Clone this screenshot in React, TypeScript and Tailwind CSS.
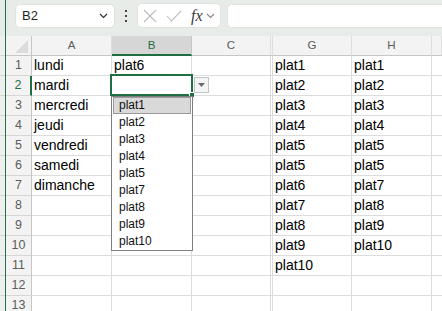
import React from "react";

const rowsA = ["lundi", "mardi", "mercredi", "jeudi", "vendredi", "samedi", "dimanche"];
const colG = ["plat1", "plat2", "plat3", "plat4", "plat5", "plat5", "plat6", "plat7", "plat8", "plat9", "plat10"];
const colH = ["plat1", "plat2", "plat3", "plat4", "plat5", "plat5", "plat7", "plat8", "plat9", "plat10"];
const listItems = ["plat1", "plat2", "plat3", "plat4", "plat5", "plat7", "plat8", "plat9", "plat10"];

const cell = "h-[20px] border-r border-b border-[#dcdcdc] text-[14px] leading-[19px] text-black pl-[2px] whitespace-nowrap overflow-visible";

function Chevron({ className }: { className?: string }) {
  return (
    <svg className={className} width="9" height="6" viewBox="0 0 9 6" fill="none">
      <path d="M1 1l3.5 3.5L8 1" stroke="currentColor" strokeWidth="1.2" />
    </svg>
  );
}

export default function App() {
  const rows = Array.from({ length: 13 }, (_, i) => i + 1);
  return (
    <div className="w-[442px] h-[311px] overflow-hidden flex bg-white font-['Liberation_Sans',sans-serif]">
      {/* left strip */}
      <div className="w-[5px] flex flex-col shrink-0">
        <div className="h-[36px] bg-[#e8ece8]" />
        <div className="flex-1 bg-[#efefef] flex flex-col">
          {rows.map((r) => (
            <div key={r} className="h-[20px] border-b border-[#d6d6d6]" />
          ))}
        </div>
      </div>
      <div className="w-px bg-[#217346] shrink-0" />
      <div className="flex-1 flex flex-col relative min-w-0">
        {/* formula bar */}
        <div className="h-[36px] bg-[#e8ece8] flex items-start pt-[4px] shrink-0">
          <div className="ml-[9px] w-[100px] h-[24px] bg-white rounded-[5px] border border-[#dfe3df] flex items-center justify-between pl-[6px] pr-[6px]">
            <span className="text-[13px] text-[#1f1f1f]">B2</span>
            <Chevron className="text-[#333]" />
          </div>
          <div className="w-[22px] h-[24px] flex flex-col items-center justify-center gap-[3px]">
            <div className="w-[2px] h-[2px] bg-[#444]" />
            <div className="w-[2px] h-[2px] bg-[#444]" />
            <div className="w-[2px] h-[2px] bg-[#444]" />
          </div>
          <div className="w-[84px] h-[25px] -mt-[1px] bg-white rounded-[5px] border border-[#dfe3df] flex items-center pl-[5px]">
            <svg width="14" height="14" viewBox="0 0 14 14" fill="none">
              <path d="M1 1l12 12M13 1L1 13" stroke="#bcbcbc" strokeWidth="1.1" />
            </svg>
            <svg className="ml-[9px]" width="16" height="12" viewBox="0 0 16 12" fill="none">
              <path d="M1 6l4.5 5L15 1" stroke="#bcbcbc" strokeWidth="1.1" />
            </svg>
            <span className="ml-[9px] font-['Liberation_Serif',serif] italic text-[16px] leading-none text-[#3a3a3a]">fx</span>
            <Chevron className="ml-[3px] text-[#8a8a8a]" />
          </div>
          <div className="ml-[6px] flex-1 h-[24px] bg-white rounded-l-[5px] border border-r-0 border-[#dfe3df]" />
        </div>
        {/* grid */}
        <div className="grid grid-cols-[26px_80px_80px_79px_2px_79px_80px_1fr]">
          {/* header row */}
          <div className="h-[20px] bg-[#f3f3f3] border-r border-b border-[#c6c6c6] relative">
            <svg className="absolute left-[9px] top-[4px]" width="13" height="13" viewBox="0 0 13 13">
              <path d="M13 0L13 13L0 13Z" fill="#dcdcdc" />
            </svg>
          </div>
          {[
            ["A", false],
            ["B", true],
            ["C", false],
            ["", false],
            ["G", false],
            ["H", false],
            ["", false],
          ].map(([l, sel], i) => (
            <div
              key={i}
              className={
                sel
                  ? "h-[20px] bg-[#d6d6d6] border-r border-[#c6c6c6] border-b-2 border-b-[#1e6e42] text-[#1e6e42] text-[11.5px] flex items-center justify-center pt-[1px]"
                  : "h-[20px] bg-[#f3f3f3] border-r border-b border-[#c6c6c6] border-r-[#dedede] text-[#5c5c5c] text-[11.5px] flex items-center justify-center"
              }
            >
              {l as string}
            </div>
          ))}
          {rows.map((r) => {
            const sel = r === 2;
            return (
              <React.Fragment key={r}>
                <div
                  className={
                    sel
                      ? "h-[20px] bg-[#f3f3f3] border-b border-[#d6d6d6] border-r-2 border-r-[#1e6e42] text-[#1e6e42] text-[12.5px] flex items-center justify-center"
                      : "h-[20px] bg-[#f3f3f3] border-b border-r border-[#d6d6d6] border-r-[#c6c6c6] text-[#5c5c5c] text-[12.5px] flex items-center justify-center"
                  }
                >
                  {r}
                </div>
                <div className={cell}>{rowsA[r - 1] ?? ""}</div>
                <div className={cell}>{r === 1 ? "plat6" : ""}</div>
                <div className={cell} />
                <div className="h-[20px] border-r border-b border-[#dcdcdc]" />
                <div className={cell}>{colG[r - 1] ?? ""}</div>
                <div className={cell}>{colH[r - 1] ?? ""}</div>
                <div className="h-[20px] border-b border-[#dcdcdc]" />
              </React.Fragment>
            );
          })}
        </div>

        {/* selection */}
        <div className="absolute left-[104px] top-[74px] w-[83px] h-[22px] border-2 border-[#1e6e42]" />
        <div className="absolute left-[183px] top-[92px] w-[5px] h-[5px] bg-[#1e6e42] border-l border-t border-white" />
        {/* dropdown button */}
        <div className="absolute left-[188px] top-[77px] w-[15px] h-[16px] bg-[#f4f4f4] border border-[#c4c4c4] flex items-center justify-center">
          <svg width="7" height="4" viewBox="0 0 7 4">
            <path d="M0 0h7L3.5 4z" fill="#6a6a6a" />
          </svg>
        </div>
        {/* list */}
        <div className="absolute left-[105px] top-[96px] w-[82px] h-[155px] bg-white border border-[#7f7f7f] flex flex-col">
          {listItems.map((it, i) => (
            <div
              key={it}
              className={
                i === 0
                  ? "h-[17px] mx-[1px] bg-[#d9d9d9] border border-[#9a9a9a] pl-[5px] text-[12px] leading-[15px] text-[#111]"
                  : "h-[17px] mx-[1px] pl-[6px] text-[12px] leading-[17px] text-[#111]"
              }
            >
              {it}
            </div>
          ))}
        </div>
      </div>
    </div>
  );
}
